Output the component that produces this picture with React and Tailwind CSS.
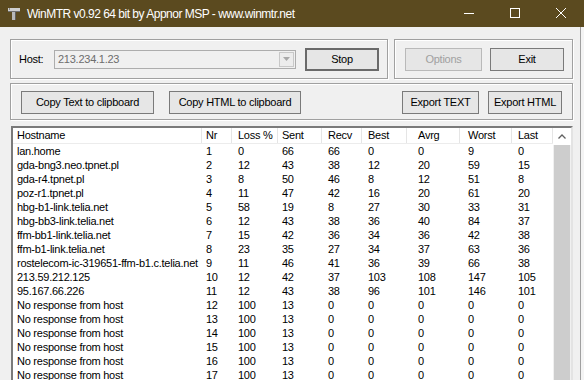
import React from "react";

const cols = [
  { name: "Hostname", cls: "w-[189px] pl-[4px]" },
  { name: "Nr", cls: "w-[30px] pl-[4px]" },
  { name: "Loss %", cls: "w-[46px] pl-[6px]" },
  { name: "Sent", cls: "w-[44px] pl-[4px]" },
  { name: "Recv", cls: "w-[40px] pl-[6px]" },
  { name: "Best", cls: "w-[45px] pl-[6px]" },
  { name: "Avrg", cls: "w-[53px] pl-[11px]" },
  { name: "Worst", cls: "w-[52px] pl-[8px]" },
  { name: "Last", cls: "w-[41px] pl-[6px]" },
];

const rows = [
  ["lan.home", 1, 0, 66, 66, 0, 0, 9, 0],
  ["gda-bng3.neo.tpnet.pl", 2, 12, 43, 38, 12, 20, 59, 15],
  ["gda-r4.tpnet.pl", 3, 8, 50, 46, 8, 12, 51, 8],
  ["poz-r1.tpnet.pl", 4, 11, 47, 42, 16, 20, 61, 20],
  ["hbg-b1-link.telia.net", 5, 58, 19, 8, 27, 30, 33, 31],
  ["hbg-bb3-link.telia.net", 6, 12, 43, 38, 36, 40, 84, 37],
  ["ffm-bb1-link.telia.net", 7, 15, 42, 36, 34, 36, 42, 38],
  ["ffm-b1-link.telia.net", 8, 23, 35, 27, 34, 37, 63, 36],
  ["rostelecom-ic-319651-ffm-b1.c.telia.net", 9, 11, 46, 41, 36, 39, 66, 38],
  ["213.59.212.125", 10, 12, 42, 37, 103, 108, 147, 105],
  ["95.167.66.226", 11, 12, 43, 38, 96, 101, 146, 101],
  ...[12, 13, 14, 15, 16, 17].map((n) => ["No response from host", n, 100, 13, 0, 0, 0, 0, 0]),
];

// classic push button
const Btn = ({ children, w, disabled, isDefault }) => (
  <div
    className={`${w} h-[23px] flex items-center justify-center bg-[#e6e6e6] ${
      disabled
        ? "border border-[#b9b9b9] text-[#a0a0a0]"
        : isDefault
        ? "border-2 border-[#6a6a6a] text-black"
        : "border border-[#7a7a7a] text-black"
    }`}
  >
    {children}
  </div>
);

const groupCls =
  "border border-[#a0a0a0] shadow-[inset_1px_1px_0_#fff,1px_1px_0_#fff]";

export default function App() {
  return (
    <div className="w-[584px] h-[380px] overflow-hidden flex flex-col bg-[#f4f4f4] font-['Liberation_Sans',Arial,sans-serif] text-[11px] tracking-[-0.25px] text-black">
      {/* title bar */}
      <div className="h-[27px] shrink-0 bg-[#5b4a1f] flex items-center text-white">
        <svg width="14" height="14" viewBox="0 0 14 14" className="ml-[7px]">
          <rect x="1" y="1" width="12" height="3" fill="#cfcfcf" />
          <rect x="1" y="4" width="12" height="1" fill="#6f6f6f" />
          <rect x="5" y="5" width="4" height="8" fill="#b8b8b8" />
          <rect x="8" y="5" width="1" height="8" fill="#5e5e5e" />
          <rect x="2" y="1" width="1" height="2" fill="#8a8a8a" />
        </svg>
        <span className="ml-[6px] text-[12px] tracking-[-0.5px]">
          WinMTR v0.92 64 bit by Appnor MSP - www.winmtr.net
        </span>
        <div className="ml-auto flex items-center">
          <svg width="46" height="27" viewBox="0 0 46 27">
            <line x1="18" y1="13.5" x2="28" y2="13.5" stroke="#fff" strokeWidth="1" />
          </svg>
          <svg width="46" height="27" viewBox="0 0 46 27">
            <rect x="18.5" y="8.5" width="9" height="9" fill="none" stroke="#fff" strokeWidth="1" />
          </svg>
          <svg width="46" height="27" viewBox="0 0 46 27">
            <path d="M18 8 L28 18 M28 8 L18 18" stroke="#fff" strokeWidth="1" />
          </svg>
        </div>
      </div>

      {/* client area */}
      <div className="flex-1 w-[581px] bg-[#f0f0f0] border-r border-[#a0a0a0] pt-[12px] pl-[10px]">
        <div className="flex gap-[6px]">
          <div className={`${groupCls} w-[378px] h-[40px] flex items-center pl-[8px]`}>
            <span className="w-[35px]">Host:</span>
            <div className="w-[242px] h-[19px] border border-[#adadad] bg-[#f0f0f0] flex items-center pl-[3px] text-[#6d6d6d] relative">
              213.234.1.23
              <div className="absolute right-[1px] top-[1px] w-[15px] h-[15px] border border-[#c8c8c8] bg-[#ececec] flex items-center justify-center">
                <svg width="7" height="4" viewBox="0 0 7 4">
                  <path d="M0 0 H7 L3.5 4 Z" fill="#a8a8a8" />
                </svg>
              </div>
            </div>
            <div className="ml-[9px]">
              <Btn w="w-[74px]" isDefault>
                Stop
              </Btn>
            </div>
          </div>
          <div className={`${groupCls} w-[179px] h-[40px] flex items-center pl-[10px] gap-[8px]`}>
            <Btn w="w-[77px]" disabled>
              Options
            </Btn>
            <Btn w="w-[74px]">Exit</Btn>
          </div>
        </div>

        <div className={`${groupCls} mt-[4px] w-[563px] h-[37px] flex items-center pl-[10px] pr-[10px] pt-[2px]`}>
          <Btn w="w-[133px]">Copy Text to clipboard</Btn>
          <div className="ml-[15px]">
            <Btn w="w-[132px]">Copy HTML to clipboard</Btn>
          </div>
          <div className="ml-auto flex gap-[9px]">
            <Btn w="w-[77px]">Export TEXT</Btn>
            <Btn w="w-[74px]">Export HTML</Btn>
          </div>
        </div>

        {/* list view */}
        <div className="mt-[6px] ml-[1px] w-[562px] h-[300px] bg-white border-2 border-t-[#7a7a7a] border-l-[#7a7a7a] border-r-[#e3e3e3] border-b-[#e3e3e3] flex">
          <div className="w-[540px]">
            <div className="flex h-[16px] border-b border-[#ececec]">
              {cols.map((c) => (
                <div key={c.name} className={`${c.cls} h-full flex items-center border-r border-[#e5e5e5]`}>
                  {c.name}
                </div>
              ))}
            </div>
            {rows.map((r, i) => (
              <div key={i} className="flex h-[14px] items-center">
                {r.map((v, j) => (
                  <div key={j} className={`${cols[j].cls} whitespace-nowrap`}>
                    {v}
                  </div>
                ))}
              </div>
            ))}
          </div>
          {/* scrollbar */}
          <div className="w-[18px] flex flex-col bg-[#f0f0f0]">
            <div className="h-[17px] flex items-center justify-center bg-white">
              <svg width="8" height="5" viewBox="0 0 8 5">
                <path d="M0.5 4.5 L4 1 L7.5 4.5" fill="none" stroke="#606060" strokeWidth="1.3" />
              </svg>
            </div>
            <div className="flex-1 mx-[1px] bg-[#cdcdcd]" />
          </div>
        </div>
      </div>
    </div>
  );
}
